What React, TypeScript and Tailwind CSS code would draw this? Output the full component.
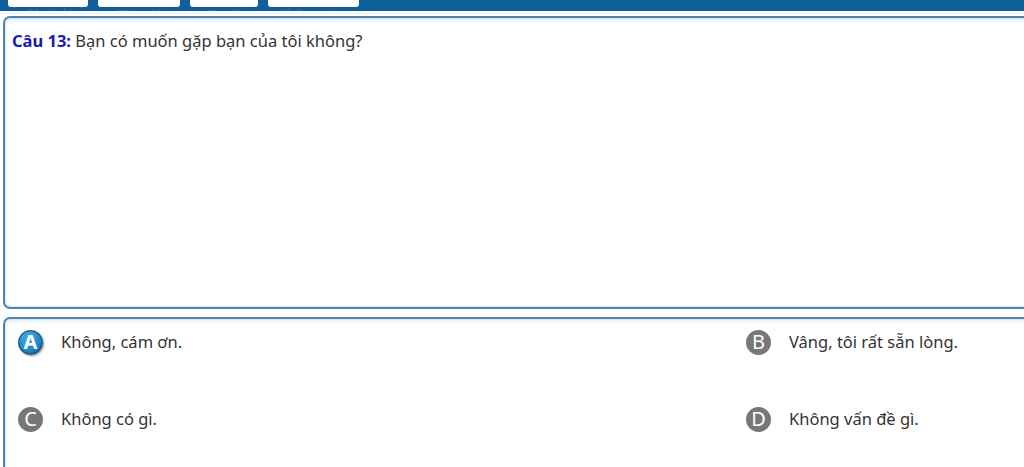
const tabs = ["Câu hỏi", "Tập bài", "Thoát", "Không gian"];

const answers = [
  { key: "A", text: "Không, cám ơn.", active: true },
  { key: "B", text: "Vâng, tôi rất sẵn lòng.", active: false },
  { key: "C", text: "Không có gì.", active: false },
  { key: "D", text: "Không vấn đề gì.", active: false },
];

function Badge({ letter, active }: { letter: string; active: boolean }) {
  return (
    <span
      className={
        active
          ? "flex h-[25px] w-[25px] shrink-0 items-center justify-center rounded-full border border-[#0b3d61] bg-[radial-gradient(circle_at_40%_30%,#45b0e8,#1a84c4_60%,#0c4f7d)] pb-[1px] text-[20px] font-bold leading-none text-white shadow-[1px_1px_2px_rgba(0,0,0,0.45)]"
          : "flex h-[25px] w-[25px] shrink-0 items-center justify-center rounded-full bg-[#777] pb-[1px] text-[20px] leading-none text-white"
      }
    >
      {letter}
    </span>
  );
}

export default function App() {
  return (
    <div className="h-[467px] w-[1024px] overflow-hidden bg-white font-['Noto_Sans','Open_Sans',sans-serif]">
      <div className="flex h-[11px] items-end gap-[10px] overflow-hidden bg-[#0f5f9a] px-[8px] pb-[4px]">
        {tabs.map((t, i) => (
          <div
            key={t}
            className={
              "flex h-[22px] shrink-0 items-end justify-center rounded-[3px] bg-white pb-[2px] text-[13px] leading-none text-[#666] " +
              (i === 0 ? "w-[80px]" : i === 1 ? "w-[82px]" : i === 2 ? "w-[68px]" : "w-[91px]")
            }
          >
            <span className="translate-y-[16px]">{t}</span>
          </div>
        ))}
      </div>
      <div className="h-[3px] bg-[linear-gradient(#ffffff,#e8f4fb)]" />

      <div className="ml-[3px] mt-[2px] h-[293px] w-[1030px] rounded-[7px] border-2 border-[#4d84b0] bg-white px-[7px] pt-[13px] shadow-[inset_0_0_0_1px_#d4e8f5,inset_0_3px_4px_#e3f1f9]">
        <p className="text-[16.5px] leading-5 text-[#333]">
          <span className="font-bold text-[#1a1aa8]">Câu 13:</span> Bạn có muốn gặp bạn của tôi không?
        </p>
      </div>

      <div className="ml-[3px] mt-[8px] h-[170px] w-[1030px] rounded-[7px] border-2 border-[#4d84b0] bg-white pl-[13px] pt-[11px] shadow-[inset_0_0_0_1px_#d4e8f5,inset_0_3px_4px_#e3f1f9]">
        <div className="grid grid-cols-[728px_1fr] gap-y-[52px]">
          {answers.map((a) => (
            <div key={a.key} className="flex items-center gap-[18px]">
              <Badge letter={a.key} active={a.active} />
              <span className="text-[16.5px] text-[#333]">{a.text}</span>
            </div>
          ))}
        </div>
      </div>
    </div>
  );
}
